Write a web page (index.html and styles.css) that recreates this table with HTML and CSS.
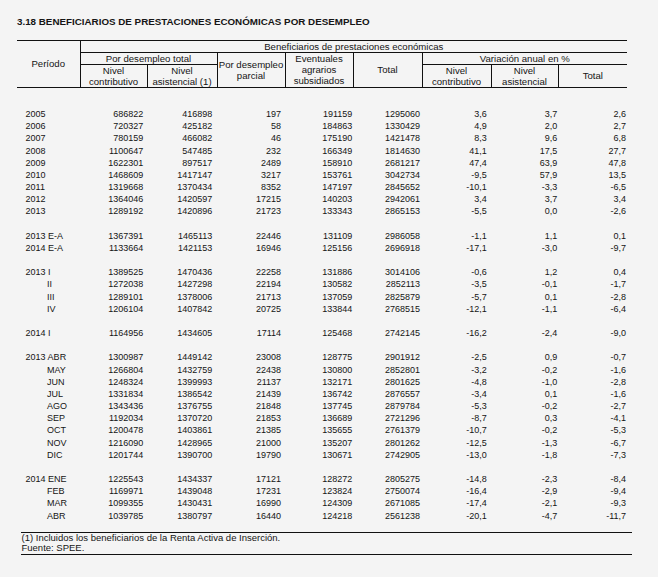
FILE: index.html
```html
<!DOCTYPE html>
<html lang="es">
<head>
<meta charset="utf-8">
<title>3.18 Beneficiarios de prestaciones económicas por desempleo</title>
<link rel="stylesheet" href="styles.css">
</head>
<body>
<div class="page">
  <div class="title">3.18 BENEFICIARIOS DE PRESTACIONES ECONÓMICAS POR DESEMPLEO</div>
  <table class="stats">
    <colgroup>
      <col style="width:63px"><col style="width:67px"><col style="width:70px"><col style="width:68px"><col style="width:68px"><col style="width:69px"><col style="width:69px"><col style="width:67px"><col style="width:69px">
    </colgroup>
    <thead>
      <tr class="h1">
        <th rowspan="3" class="periodo">Período</th>
        <th colspan="8" class="bb">Beneficiarios de prestaciones económicas</th>
      </tr>
      <tr class="h2">
        <th colspan="2" class="bb">Por desempleo total</th>
        <th rowspan="2" class="bl br bb">Por desempleo<br>parcial</th>
        <th rowspan="2" class="br bb">Eventuales<br>agrarios<br>subsidiados</th>
        <th rowspan="2" class="br bb">Total</th>
        <th colspan="3" class="bb">Variación anual en %</th>
      </tr>
      <tr class="h3">
        <th class="br bb">Nivel<br>contributivo</th>
        <th class="bb">Nivel<br>asistencial (1)</th>
        <th class="br bb">Nivel<br>contributivo</th>
        <th class="br bb">Nivel<br>asistencial</th>
        <th class="bb">Total</th>
      </tr>
    </thead>
    <tbody>
      <tr class="spacer"><td colspan="9"></td></tr>
      <tr><td>2005</td><td>686822</td><td>416898</td><td>197</td><td>191159</td><td>1295060</td><td>3,6</td><td>3,7</td><td>2,6</td></tr>
      <tr><td>2006</td><td>720327</td><td>425182</td><td>58</td><td>184863</td><td>1330429</td><td>4,9</td><td>2,0</td><td>2,7</td></tr>
      <tr><td>2007</td><td>780159</td><td>466082</td><td>46</td><td>175190</td><td>1421478</td><td>8,3</td><td>9,6</td><td>6,8</td></tr>
      <tr><td>2008</td><td>1100647</td><td>547485</td><td>232</td><td>166349</td><td>1814630</td><td>41,1</td><td>17,5</td><td>27,7</td></tr>
      <tr><td>2009</td><td>1622301</td><td>897517</td><td>2489</td><td>158910</td><td>2681217</td><td>47,4</td><td>63,9</td><td>47,8</td></tr>
      <tr><td>2010</td><td>1468609</td><td>1417147</td><td>3217</td><td>153761</td><td>3042734</td><td>-9,5</td><td>57,9</td><td>13,5</td></tr>
      <tr><td>2011</td><td>1319668</td><td>1370434</td><td>8352</td><td>147197</td><td>2845652</td><td>-10,1</td><td>-3,3</td><td>-6,5</td></tr>
      <tr><td>2012</td><td>1364046</td><td>1420597</td><td>17215</td><td>140203</td><td>2942061</td><td>3,4</td><td>3,7</td><td>3,4</td></tr>
      <tr><td>2013</td><td>1289192</td><td>1420896</td><td>21723</td><td>133343</td><td>2865153</td><td>-5,5</td><td>0,0</td><td>-2,6</td></tr>
      <tr class="gap"><td colspan="9"></td></tr>
      <tr><td>2013 E-A</td><td>1367391</td><td>1465113</td><td>22446</td><td>131109</td><td>2986058</td><td>-1,1</td><td>1,1</td><td>0,1</td></tr>
      <tr><td>2014 E-A</td><td>1133664</td><td>1421153</td><td>16946</td><td>125156</td><td>2696918</td><td>-17,1</td><td>-3,0</td><td>-9,7</td></tr>
      <tr class="gap"><td colspan="9"></td></tr>
      <tr><td>2013 I</td><td>1389525</td><td>1470436</td><td>22258</td><td>131886</td><td>3014106</td><td>-0,6</td><td>1,2</td><td>0,4</td></tr>
      <tr><td class="sub">II</td><td>1272038</td><td>1427298</td><td>22194</td><td>130582</td><td>2852113</td><td>-3,5</td><td>-0,1</td><td>-1,7</td></tr>
      <tr><td class="sub">III</td><td>1289101</td><td>1378006</td><td>21713</td><td>137059</td><td>2825879</td><td>-5,7</td><td>0,1</td><td>-2,8</td></tr>
      <tr><td class="sub">IV</td><td>1206104</td><td>1407842</td><td>20725</td><td>133844</td><td>2768515</td><td>-12,1</td><td>-1,1</td><td>-6,4</td></tr>
      <tr class="gap"><td colspan="9"></td></tr>
      <tr><td>2014 I</td><td>1164956</td><td>1434605</td><td>17114</td><td>125468</td><td>2742145</td><td>-16,2</td><td>-2,4</td><td>-9,0</td></tr>
      <tr class="gap"><td colspan="9"></td></tr>
      <tr><td>2013 ABR</td><td>1300987</td><td>1449142</td><td>23008</td><td>128775</td><td>2901912</td><td>-2,5</td><td>0,9</td><td>-0,7</td></tr>
      <tr><td class="sub">MAY</td><td>1266804</td><td>1432759</td><td>22438</td><td>130800</td><td>2852801</td><td>-3,2</td><td>-0,2</td><td>-1,6</td></tr>
      <tr><td class="sub">JUN</td><td>1248324</td><td>1399993</td><td>21137</td><td>132171</td><td>2801625</td><td>-4,8</td><td>-1,0</td><td>-2,8</td></tr>
      <tr><td class="sub">JUL</td><td>1331834</td><td>1386542</td><td>21439</td><td>136742</td><td>2876557</td><td>-3,4</td><td>0,1</td><td>-1,6</td></tr>
      <tr><td class="sub">AGO</td><td>1343436</td><td>1376755</td><td>21848</td><td>137745</td><td>2879784</td><td>-5,3</td><td>-0,2</td><td>-2,7</td></tr>
      <tr><td class="sub">SEP</td><td>1192034</td><td>1370720</td><td>21853</td><td>136689</td><td>2721296</td><td>-8,7</td><td>0,3</td><td>-4,1</td></tr>
      <tr><td class="sub">OCT</td><td>1200478</td><td>1403861</td><td>21385</td><td>135655</td><td>2761379</td><td>-10,7</td><td>-0,2</td><td>-5,3</td></tr>
      <tr><td class="sub">NOV</td><td>1216090</td><td>1428965</td><td>21000</td><td>135207</td><td>2801262</td><td>-12,5</td><td>-1,3</td><td>-6,7</td></tr>
      <tr><td class="sub">DIC</td><td>1201744</td><td>1390700</td><td>19790</td><td>130671</td><td>2742905</td><td>-13,0</td><td>-1,8</td><td>-7,3</td></tr>
      <tr class="gap"><td colspan="9"></td></tr>
      <tr><td>2014 ENE</td><td>1225543</td><td>1434337</td><td>17121</td><td>128272</td><td>2805275</td><td>-14,8</td><td>-2,3</td><td>-8,4</td></tr>
      <tr><td class="sub">FEB</td><td>1169971</td><td>1439048</td><td>17231</td><td>123824</td><td>2750074</td><td>-16,4</td><td>-2,9</td><td>-9,4</td></tr>
      <tr><td class="sub">MAR</td><td>1099355</td><td>1430431</td><td>16990</td><td>124309</td><td>2671085</td><td>-17,4</td><td>-2,1</td><td>-9,3</td></tr>
      <tr><td class="sub">ABR</td><td>1039785</td><td>1380797</td><td>16440</td><td>124218</td><td>2561238</td><td>-20,1</td><td>-4,7</td><td>-11,7</td></tr>
    </tbody>
  </table>
  <div class="notes">
    <div>(1) Incluidos los beneficiarios de la Renta Activa de Inserción.</div>
    <div>Fuente: SPEE.</div>
  </div>
</div>
</body>
</html>
```

FILE: styles.css
```css
html, body {
  margin: 0;
  padding: 0;
  background: #f4f4f4;
}

body {
  font-family: "Liberation Sans", Arial, sans-serif;
  color: #151515;
}

.page {
  padding: 15.5px 0 0 17px;
}

.title {
  font-weight: bold;
  font-size: 9.8px;
  line-height: 12px;
  height: 12px;
  white-space: nowrap;
}

.stats {
  margin-top: 12px;
  width: 610px;
  table-layout: fixed;
  border-collapse: collapse;
  border-top: 1px solid #111;
}

.stats th {
  font-weight: normal;
  font-size: 9.6px;
  line-height: 11px;
  padding: 0;
  text-align: center;
  vertical-align: middle;
  white-space: nowrap;
}

.stats .h1 { height: 12px; }
.stats .h2 { height: 11px; }
.stats .h3 { height: 23px; }

.stats th.periodo {
  border-right: 1px solid #111;
  border-bottom: 1px solid #111;
}

.stats .bb { border-bottom: 1px solid #111; }
.stats .br { border-right: 1px solid #111; }
.stats .bl { border-left: 1px solid #111; }

.stats td {
  font-size: 9px;
  line-height: 12.17px;
  height: 12.17px;
  padding: 0;
  text-align: right;
  white-space: nowrap;
}

.stats tr.spacer td { height: 20.5px; }
.stats tr.gap td { height: 12.17px; }

.stats td:nth-child(1) { text-align: left; padding-left: 8.6px; }
.stats td.sub { padding-left: 30px; }
.stats td:nth-child(2) { padding-right: 3.7px; }
.stats td:nth-child(3) { padding-right: 4.7px; }
.stats td:nth-child(4) { padding-right: 4px; }
.stats td:nth-child(5) { padding-right: 0.7px; }
.stats td:nth-child(6) { padding-right: 2px; }
.stats td:nth-child(7) { padding-right: 4.3px; }
.stats td:nth-child(8) { padding-right: 0.7px; }
.stats td:nth-child(9) { padding-right: 1px; }

.notes {
  margin: 10px 0 0 4px;
  width: 611px;
  border-top: 1px solid #111;
  border-bottom: 1px solid #111;
  font-size: 9.5px;
  line-height: 10.4px;
  padding-left: 0.5px;
  box-sizing: border-box;
}
```
